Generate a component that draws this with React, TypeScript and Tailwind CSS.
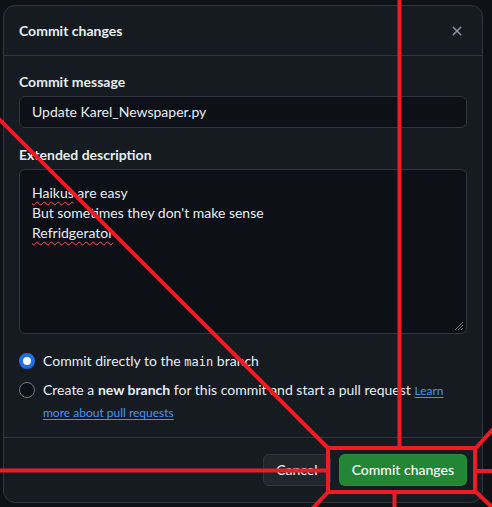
const font = { fontFamily: 'Lato, "Noto Sans", sans-serif' };

const Radio = ({ checked }: { checked?: boolean }) =>
  checked ? (
    <span className="mt-[2px] block h-4 w-4 shrink-0 rounded-full border-[4px] border-[#1f6feb] bg-white" />
  ) : (
    <span className="mt-[2px] block h-4 w-4 shrink-0 rounded-full border border-[#6e7681] bg-[#0d1117]" />
  );

const Overlay = () => (
  <svg
    className="pointer-events-none absolute left-0 top-0"
    width="492"
    height="507"
    viewBox="0 0 492 507"
    fill="none"
    stroke="#ed1c24"
    strokeWidth="4"
  >
    <line x1="399.5" y1="0" x2="399.5" y2="448" />
    <line x1="-2" y1="118" x2="329" y2="449" />
    <rect x="328" y="448" width="147" height="44" />
    <line x1="0" y1="470.5" x2="328" y2="470.5" />
    <line x1="475" y1="471" x2="492" y2="471" />
    <line x1="394.5" y1="492" x2="394.5" y2="507" />
    <line x1="475" y1="449" x2="494" y2="428" />
    <line x1="475" y1="491" x2="494" y2="509" />
    <line x1="329" y1="491" x2="312" y2="509" />
  </svg>
);

const squiggle = "underline decoration-[#f85149] decoration-wavy decoration-1 underline-offset-[3px]";

export default function App() {
  return (
    <div
      className="relative h-[507px] w-[492px] overflow-hidden bg-[#0e1116] pl-[3px] pt-[5px] text-sm text-[#e6edf3]"
      style={font}
    >
      <div className="flex h-[498px] w-[480px] flex-col rounded-xl border border-[#30363d] bg-[#161b22]">
        <div className="flex h-[50px] shrink-0 items-center justify-between border-b border-[#30363d] pl-[15px] pr-[17px]">
          <h2 className="font-bold">Commit changes</h2>
          <svg width="16" height="16" viewBox="0 0 16 16" fill="#8b949e">
            <path d="M3.72 3.72a.75.75 0 0 1 1.06 0L8 6.94l3.22-3.22a.749.749 0 0 1 1.275.326.749.749 0 0 1-.215.734L9.06 8l3.22 3.22a.749.749 0 0 1-.326 1.275.749.749 0 0 1-.734-.215L8 9.06l-3.22 3.22a.751.751 0 0 1-1.042-.018.751.751 0 0 1-.018-1.042L6.94 8 3.72 4.78a.75.75 0 0 1 0-1.06Z" />
          </svg>
        </div>

        <div className="flex flex-col px-[15px] pt-4">
          <label className="mb-1 font-bold leading-5">Commit message</label>
          <div className="flex h-8 items-center rounded-md border border-[#30363d] bg-[#0d1117] px-3">
            Update Karel_Newspaper.py
          </div>

          <label className="mb-1 mt-[17px] font-bold leading-5">Extended description</label>
          <div className="relative h-[165px] rounded-md border border-[#30363d] bg-[#0d1117] px-3 pt-[13px] leading-5">
            <div>
              <span className={squiggle}>Haikus</span> are easy
            </div>
            <div>But sometimes they don't make sense</div>
            <div>
              <span className={squiggle}>Refridgerator</span>
            </div>
            <svg className="absolute bottom-[2px] right-[2px]" width="12" height="12" viewBox="0 0 12 12" stroke="#6e7681" strokeWidth="1">
              <line x1="11" y1="3" x2="3" y2="11" />
              <line x1="11" y1="6" x2="6" y2="11" />
              <line x1="11" y1="9" x2="9" y2="11" />
            </svg>
          </div>

          <div className="mt-[17px] flex gap-2 leading-5">
            <Radio checked />
            <span>
              Commit directly to the{" "}
              <code style={{ fontFamily: '"DejaVu Sans Mono", monospace' }} className="text-[12px]">
                main
              </code>{" "}
              branch
            </span>
          </div>
          <div className="mt-2 flex gap-2">
            <Radio />
            <div className="flex flex-col">
              <span className="whitespace-nowrap leading-5">
                Create a <b className="font-bold">new branch</b> for this commit and start a pull request{" "}
                <a href="#" className="text-[12px] text-[#4493f8] underline underline-offset-2">
                  Learn
                </a>
              </span>
              <a href="#" className="mt-[2px] text-[12px] leading-5 text-[#4493f8] underline underline-offset-2">
                more about pull requests
              </a>
            </div>
          </div>
        </div>

        <div className="mt-auto flex shrink-0 justify-end gap-2 border-t border-[#30363d] px-[15px] py-4">
          <button className="h-8 rounded-md border border-[#30363d] bg-[#21262d] px-3 font-medium">Cancel</button>
          <button className="h-8 rounded-md border border-[#2ea043]/40 bg-[#238636] px-3 font-medium text-white">
            Commit changes
          </button>
        </div>
      </div>
      <Overlay />
    </div>
  );
}
